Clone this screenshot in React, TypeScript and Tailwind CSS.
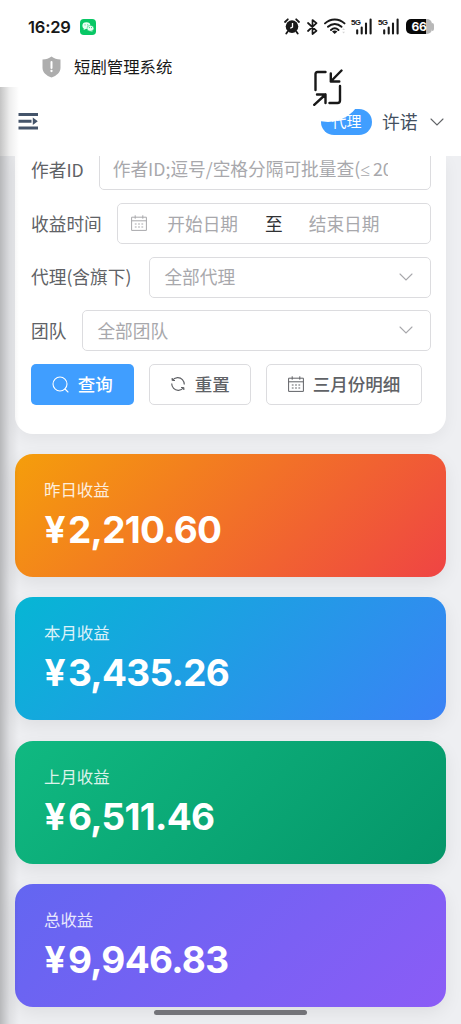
import type { ReactNode } from "react";

const cards = [
  { label: "昨日收益", value: "2,210.60", bg: "bg-[linear-gradient(135deg,#f59e0b,#ef4444)]" },
  { label: "本月收益", value: "3,435.26", bg: "bg-[linear-gradient(135deg,#06b6d4,#3b82f6)]" },
  { label: "上月收益", value: "6,511.46", bg: "bg-[linear-gradient(135deg,#10b981,#059669)]" },
  { label: "总收益", value: "9,946.83", bg: "bg-[linear-gradient(135deg,#6366f1,#8b5cf6)]" },
];

function ChevronDown({ className }: { className: string }) {
  return (
    <svg width="14" height="8" viewBox="0 0 14 8" fill="none" stroke="currentColor" className={className}>
      <path d="M1 1l6 6 6-6" strokeWidth="1.1" strokeLinecap="round" />
    </svg>
  );
}

function CalendarIcon({ className }: { className: string }) {
  return (
    <svg width="16" height="16" viewBox="0 0 16 16" fill="none" stroke="currentColor" className={className}>
      <path d="M.6 2.2h14.8v13.2H.6zM.6 5.8h14.8M4.2.3v3.4M11.8.3v3.4" />
      <path d="M3.8 9h1.8M7.1 9h1.8M10.4 9h1.8M3.8 12h1.8M7.1 12h1.8M10.4 12h1.8" strokeWidth="1.1" />
    </svg>
  );
}

function Signal() {
  return (
    <div className="flex h-[17px] w-[22px] items-start">
      <span className="h-[9px] w-[10px] whitespace-nowrap font-['Liberation_Sans'] text-[8px] font-bold leading-[9px] tracking-[-0.6px]">5G</span>
      <svg width="17" height="17" viewBox="5 0 17 17" fill="none" stroke="#181818" className="-ml-[5px] shrink-0">
        <path d="M6.2 12.2v3.3M10.7 9.6v5.9M15 5.6v9.9M19.6 1.6v13.9" strokeWidth="2.1" strokeLinecap="round" />
      </svg>
    </div>
  );
}

function StatusBar() {
  return (
    <div className="flex h-[50px] items-center pl-7 pt-[3px] text-[#181818]">
      <span className="w-[43px] whitespace-nowrap font-[Inter] text-[16.5px] font-semibold leading-5 tracking-[-0.2px]">16:29</span>
      <svg width="16" height="16" viewBox="0 0 16 16" className="ml-[9px]">
        <rect width="16" height="16" rx="3.8" fill="#08c765" />
        <ellipse cx="6.4" cy="6.7" rx="4" ry="3.4" fill="#e9fff3" />
        <path d="M4 9l-.4 2 2.2-1.1zM11.6 11.2l1 1.6-2.3-.8z" fill="#e9fff3" />
        <ellipse cx="10.4" cy="9.3" rx="3.4" ry="2.9" fill="#e9fff3" stroke="#08c765" strokeWidth=".5" />
        <path d="M5 5.9h.1M7.7 5.9h.1M9.3 8.6h.1M11.4 8.6h.1" stroke="#08c765" strokeWidth=".9" strokeLinecap="round" />
      </svg>
      <svg width="16" height="17" viewBox="0 0 16 17" fill="none" className="ml-[188px]">
        <circle cx="8" cy="8.6" r="6.3" fill="#181818" />
        <path d="M1 4l2.8-2.7M15 4l-2.8-2.7M3.7 13.6l-1.4 2M12.3 13.6l1.4 2" stroke="#181818" strokeWidth="1.8" strokeLinecap="round" />
        <path d="M8.5 5v4L6.3 10.2" stroke="#fff" strokeWidth="1.3" />
      </svg>
      <svg width="11" height="16" viewBox="0 0 11 16" fill="none" stroke="#181818" className="ml-[7px]">
        <path d="M1 4l8.5 7.8L5.5 15V1l4 3.2L1 12" strokeWidth="1.7" strokeLinejoin="round" strokeLinecap="round" />
      </svg>
      <svg width="23" height="17" viewBox="0 0 23 17" fill="none" className="ml-[6px]">
        <path d="M1 5.4c5.5-5.3 14-5.3 19.5 0M4 8.8c4-3.8 9.5-3.8 13.5 0M7 12c2.3-2.1 5.3-2.1 7.5 0" stroke="#181818" strokeWidth="1.9" strokeLinecap="round" />
        <path d="M8 13.6q2.7-2.3 5.4 0L10.7 16z" fill="#181818" />
        <path d="M18.2 12l1.4-1.8L21 12zM18.2 13.8l1.4 1.8 1.4-1.8z" fill="#d5d5d5" />
      </svg>
      <div className="ml-[4px] flex gap-[5px]">
        <Signal />
        <Signal />
      </div>
      <div className="ml-[6px] flex items-center">
        <div className="flex h-[15px] w-[26px] items-center justify-center rounded-[5px] bg-[linear-gradient(90deg,#080808_20px,#b8b8b8_20px)] font-[Inter] text-[12px] font-bold leading-none tracking-[-0.3px] text-white">
          66
        </div>
        <div className="h-2 w-[2px] rounded-r bg-[#b8b8b8]" />
      </div>
    </div>
  );
}

function TitleBar() {
  return (
    <div className="flex h-[37px] items-start pl-[42px]">
      <svg width="19" height="22" viewBox="0 0 19 22" className="mt-[5.5px]">
        <path d="M9.5.4c2.6 1.9 5.4 2.9 9 3.1v8.2c0 4.7-3.8 7.8-9 9.9-5.2-2.1-9-5.2-9-9.9V3.5C4.1 3.3 6.9 2.3 9.5.4z" fill="#adadad" />
        <path d="M9.5 6v6" stroke="#fff" strokeWidth="2" strokeLinecap="round" />
        <circle cx="9.5" cy="15" r="1.15" fill="#fff" />
      </svg>
      <span className="ml-[13px] mt-[4px] text-[16.4px] leading-6 text-[#181818]">短剧管理系统</span>
    </div>
  );
}

function Header() {
  return (
    <header className="relative flex h-[69px] items-center bg-white pl-[18px] pr-[17.5px]">
      <svg width="21" height="17" viewBox="0 0 21 17" fill="#44546a">
        <path d="M.5 0H20v3H.5zM.5 6.8h13v3H.5zM.5 13.6H20v3H.5zM14.8 4.5l5 3.8-5 3.8z" />
      </svg>
      <div className="flex-1" />
      <span className="flex h-[26px] w-[51px] items-center justify-center rounded-full bg-[#409eff] text-[15px] text-white">代理</span>
      <span className="-mt-[1px] ml-[10px] text-[17.8px] text-[#44505f]">许诺</span>
      <ChevronDown className="ml-[12px] text-[#606266]" />
      {/* floating minimize button */}
      <div className="absolute left-[293px] top-[-35px] flex size-[70px] items-center justify-center rounded-full bg-white">
        <svg width="30" height="37" viewBox="0 0 30 37" fill="none" stroke="#181818" strokeWidth="2.4" strokeLinecap="round" strokeLinejoin="round">
          <path d="M12.5 3H4.5Q2.5 3 2.5 5v16M28.500 1.500 17.800 12.500M17.800 4.500v8h8.500M27 17v14.500q0 2.500-2.500 2.500H16.500M1.200 35.800 12.500 25.500M4 25.500h8.500V34" />
        </svg>
      </div>
    </header>
  );
}

function Row({ label, children }: { label: string; children: ReactNode }) {
  return (
    <div className="flex h-[41px] items-center">
      <span className="-mt-[1px] mr-[15.5px] shrink-0 whitespace-nowrap text-[17.7px] text-[#606266]">{label}</span>
      {children}
    </div>
  );
}

function Box({ children }: { children: ReactNode }) {
  return (
    <div className="flex h-[41px] min-w-0 flex-1 items-center rounded-[5px] border border-[#dcdcdf] px-[13.5px] pb-[1px] text-[17.7px] text-[#a8a8ac]">
      {children}
    </div>
  );
}

function FilterPanel() {
  return (
    <section className="h-[277.5px] overflow-hidden rounded-b-[18px] bg-white pl-[16px] pr-[15.5px] shadow-[0_5px_16px_rgba(0,0,0,0.05)]">
      <div className="-mt-[7px] flex flex-col gap-[12.8px]">
        <Row label="作者ID">
          <Box>
            <span className="-ml-[1px] w-[275px] overflow-hidden whitespace-nowrap">
              作者ID;逗号/空格分隔可批量查(<span className="font-['Noto_Sans']">≤</span>
              <span className="ml-[3px]">200个)</span>
            </span>
          </Box>
        </Row>
        <Row label="收益时间">
          <Box>
            <CalendarIcon className="-ml-[1px] shrink-0" />
            <span className="ml-[20.5px] whitespace-nowrap">开始日期</span>
            <span className="ml-[27px] text-[#303133]">至</span>
            <span className="ml-[26px] whitespace-nowrap">结束日期</span>
          </Box>
        </Row>
        <Row label="代理(含旗下)">
          <div className="ml-[2px] flex min-w-0 flex-1">
            <Box>
              <span className="ml-[1px] flex-1">全部代理</span>
              <ChevronDown className="mr-[3px]" />
            </Box>
          </div>
        </Row>
        <Row label="团队">
          <Box>
            <span className="ml-[1px] flex-1">全部团队</span>
            <ChevronDown className="mr-[3px]" />
          </Box>
        </Row>
        <div className="flex h-[41px] gap-[15px] text-[17.5px] font-medium text-[#606266]">
          <button className="flex w-[102.5px] items-center justify-center gap-[9px] rounded-[5px] bg-[#409eff] pb-[1px] text-white">
            <svg width="17" height="17" viewBox="0 0 17 17" fill="none" stroke="currentColor" strokeWidth="1.1">
              <circle cx="8" cy="8" r="7" />
              <path d="M13 13l3 3" strokeLinecap="round" />
            </svg>
            查询
          </button>
          <button className="flex w-[102.5px] items-center justify-center gap-[9px] rounded-[5px] border border-[#dcdcdf] pb-[1px]">
            <svg width="16" height="16" viewBox="0 0 16 16" fill="none" stroke="currentColor" strokeWidth="1.2">
              <path d="M2.2 4.5H5M2.2 4.5V1.9M2.2 4.5C5 .9 9.8.8 12.4 3.6c1.3 1.4 1.9 3 1.9 4.9M13.8 11.5H11M13.8 11.5v2.6M13.8 11.5c-2.8 3.6-7.6 3.7-10.2.9C2.3 11 1.7 9.4 1.7 7.5" />
            </svg>
            重置
          </button>
          <button className="flex w-[156px] items-center justify-center gap-[9px] rounded-[5px] border border-[#dcdcdf] pb-[1px]">
            <CalendarIcon className="shrink-0" />
            三月份明细
          </button>
        </div>
      </div>
    </section>
  );
}

export default function App() {
  return (
    <div className="relative h-[1024px] w-[461px] overflow-hidden bg-white font-['Noto_Sans_CJK_SC',sans-serif]">
      <StatusBar />
      <TitleBar />
      <Header />
      <main className="h-[868px] bg-[#eeeff2] pl-[15px] pr-[15px]">
        <FilterPanel />
        <div className="mt-[20.5px] flex flex-col gap-[20.4px]">
          {cards.map((card) => (
            <div key={card.label} className={`h-[123px] rounded-[18px] pl-[29px] pt-[23px] text-white shadow-[0_6px_18px_rgba(0,0,0,0.07)] ${card.bg}`}>
              <div className="text-[16.4px] leading-6 opacity-85">{card.label}</div>
              <div className="ml-[0.5px] mt-[7px] whitespace-nowrap font-[Inter] text-[37px] font-bold leading-[44px] tracking-[-0.7px]">
                <span className="mr-[3px]">¥</span>
                {card.value}
              </div>
            </div>
          ))}
        </div>
      </main>
      {/* edge shadow of the page sliding in */}
      <div className="pointer-events-none absolute bottom-0 left-0 top-[87px] w-[19px] bg-[linear-gradient(90deg,rgba(0,0,0,0.23),rgba(0,0,0,0.07)_50%,transparent)]" />
      <div className="absolute bottom-[9px] left-[154px] h-[5px] w-[153px] rounded-full bg-[#737378]" />
    </div>
  );
}
